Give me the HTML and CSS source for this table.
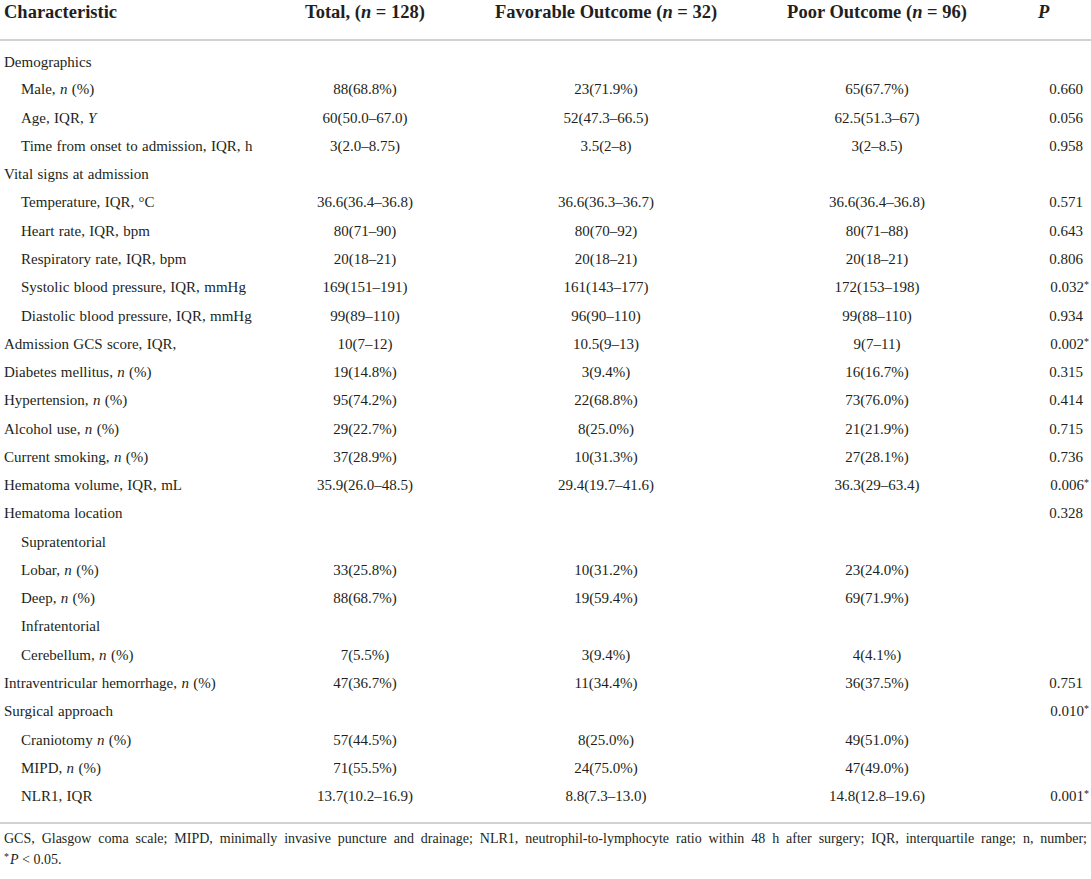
FILE: index.html
```html
<!DOCTYPE html>
<html>
<head>
<meta charset="utf-8">
<link rel="stylesheet" href="styles.css">
</head>
<body>
<table class="tbl">
  <colgroup>
    <col class="c1"><col class="c2"><col class="c3"><col class="c4"><col class="c5">
  </colgroup>
  <thead>
    <tr>
      <th class="lbl">Characteristic</th>
      <th>Total, (<i>n</i> = 128)</th>
      <th>Favorable Outcome (<i>n</i> = 32)</th>
      <th>Poor Outcome (<i>n</i> = 96)</th>
      <th class="pcol"><i>P</i></th>
    </tr>
  </thead>
  <tbody>
    <tr class="first"><td class="lbl">Demographics</td><td></td><td></td><td></td><td></td></tr>
    <tr><td class="lbl ind">Male, <i>n</i> (%)</td><td>88(68.8%)</td><td>23(71.9%)</td><td>65(67.7%)</td><td class="pv">0.660</td></tr>
    <tr><td class="lbl ind">Age, IQR, <i>Y</i></td><td>60(50.0–67.0)</td><td>52(47.3–66.5)</td><td>62.5(51.3–67)</td><td class="pv">0.056</td></tr>
    <tr><td class="lbl ind">Time from onset to admission, IQR, h</td><td>3(2.0–8.75)</td><td>3.5(2–8)</td><td>3(2–8.5)</td><td class="pv">0.958</td></tr>
    <tr><td class="lbl">Vital signs at admission</td><td></td><td></td><td></td><td></td></tr>
    <tr><td class="lbl ind">Temperature, IQR, °C</td><td>36.6(36.4–36.8)</td><td>36.6(36.3–36.7)</td><td>36.6(36.4–36.8)</td><td class="pv">0.571</td></tr>
    <tr><td class="lbl ind">Heart rate, IQR, bpm</td><td>80(71–90)</td><td>80(70–92)</td><td>80(71–88)</td><td class="pv">0.643</td></tr>
    <tr><td class="lbl ind">Respiratory rate, IQR, bpm</td><td>20(18–21)</td><td>20(18–21)</td><td>20(18–21)</td><td class="pv">0.806</td></tr>
    <tr><td class="lbl ind">Systolic blood pressure, IQR, mmHg</td><td>169(151–191)</td><td>161(143–177)</td><td>172(153–198)</td><td class="pv">0.032<span class="ast">*</span></td></tr>
    <tr><td class="lbl ind">Diastolic blood pressure, IQR, mmHg</td><td>99(89–110)</td><td>96(90–110)</td><td>99(88–110)</td><td class="pv">0.934</td></tr>
    <tr><td class="lbl">Admission GCS score, IQR,</td><td>10(7–12)</td><td>10.5(9–13)</td><td>9(7–11)</td><td class="pv">0.002<span class="ast">*</span></td></tr>
    <tr><td class="lbl">Diabetes mellitus, <i>n</i> (%)</td><td>19(14.8%)</td><td>3(9.4%)</td><td>16(16.7%)</td><td class="pv">0.315</td></tr>
    <tr><td class="lbl">Hypertension, <i>n</i> (%)</td><td>95(74.2%)</td><td>22(68.8%)</td><td>73(76.0%)</td><td class="pv">0.414</td></tr>
    <tr><td class="lbl">Alcohol use, <i>n</i> (%)</td><td>29(22.7%)</td><td>8(25.0%)</td><td>21(21.9%)</td><td class="pv">0.715</td></tr>
    <tr><td class="lbl">Current smoking, <i>n</i> (%)</td><td>37(28.9%)</td><td>10(31.3%)</td><td>27(28.1%)</td><td class="pv">0.736</td></tr>
    <tr><td class="lbl">Hematoma volume, IQR, mL</td><td>35.9(26.0–48.5)</td><td>29.4(19.7–41.6)</td><td>36.3(29–63.4)</td><td class="pv">0.006<span class="ast">*</span></td></tr>
    <tr><td class="lbl">Hematoma location</td><td></td><td></td><td></td><td class="pv">0.328</td></tr>
    <tr><td class="lbl ind">Supratentorial</td><td></td><td></td><td></td><td></td></tr>
    <tr><td class="lbl ind">Lobar, <i>n</i> (%)</td><td>33(25.8%)</td><td>10(31.2%)</td><td>23(24.0%)</td><td></td></tr>
    <tr><td class="lbl ind">Deep, <i>n</i> (%)</td><td>88(68.7%)</td><td>19(59.4%)</td><td>69(71.9%)</td><td></td></tr>
    <tr><td class="lbl ind">Infratentorial</td><td></td><td></td><td></td><td></td></tr>
    <tr><td class="lbl ind">Cerebellum, <i>n</i> (%)</td><td>7(5.5%)</td><td>3(9.4%)</td><td>4(4.1%)</td><td></td></tr>
    <tr><td class="lbl">Intraventricular hemorrhage, <i>n</i> (%)</td><td>47(36.7%)</td><td>11(34.4%)</td><td>36(37.5%)</td><td class="pv">0.751</td></tr>
    <tr><td class="lbl">Surgical approach</td><td></td><td></td><td></td><td class="pv">0.010<span class="ast">*</span></td></tr>
    <tr><td class="lbl ind">Craniotomy <i>n</i> (%)</td><td>57(44.5%)</td><td>8(25.0%)</td><td>49(51.0%)</td><td></td></tr>
    <tr><td class="lbl ind">MIPD, <i>n</i> (%)</td><td>71(55.5%)</td><td>24(75.0%)</td><td>47(49.0%)</td><td></td></tr>
    <tr class="last"><td class="lbl ind">NLR1, IQR</td><td>13.7(10.2–16.9)</td><td>8.8(7.3–13.0)</td><td>14.8(12.8–19.6)</td><td class="pv">0.001<span class="ast">*</span></td></tr>
  </tbody>
</table>
<div class="notes">
  <p class="note just">GCS, Glasgow coma scale; MIPD, minimally invasive puncture and drainage; NLR1, neutrophil-to-lymphocyte ratio within 48 h after surgery; IQR, interquartile range; n, number;</p>
  <p class="note"><span class="ast">*</span><i>P</i> &lt; 0.05.</p>
</div>
</body>
</html>
```
FILE: styles.css
```css
html, body {
  margin: 0;
  padding: 0;
  background: #fff;
}
body {
  font-family: "Liberation Serif", "Times New Roman", serif;
  color: #231f20;
  width: 1091px;
}
.tbl {
  width: 1091px;
  border-collapse: collapse;
  table-layout: fixed;
}
.c1 { width: 245px; }
.c2 { width: 240px; }
.c3 { width: 242px; }
.c4 { width: 300px; }
.c5 { width: 64px; }
.tbl th {
  font-size: 18.5px;
  font-weight: bold;
  line-height: 24px;
  padding: 0 0 15px 0;
  text-align: center;
  border-bottom: 2px solid #d2d2d2;
  white-space: nowrap;
}
.tbl th.lbl { text-align: left; padding-left: 4px; }
.tbl th.pcol { text-align: left; padding-left: 11px; }
.tbl td {
  font-size: 15px;
  line-height: 18px;
  height: 28.27px;
  padding: 0;
  text-align: center;
  vertical-align: middle;
  white-space: nowrap;
  box-sizing: border-box;
}
.tbl td.lbl { text-align: left; padding-left: 4px; word-spacing: 0.6px; }
.tbl td.lbl.ind { padding-left: 21px; }
.tbl td.pv { text-align: right; padding-right: 8px; }
.tbl tr.first td { height: 35.27px; padding-top: 7px; }
.tbl tr.last td { height: 41px; padding-bottom: 12px; border-bottom: 2px solid #d2d2d2; }
.ast {
  font-size: 10px;
  vertical-align: 4px;
  line-height: 0;
  margin-right: -6px;
}
.notes {
  padding: 4px 4px 0 4px;
}
.note {
  margin: 0;
  font-size: 14px;
  line-height: 21px;
}
.note .ast { margin-right: 1px; }
.just {
  text-align: justify;
  text-align-last: justify;
}
```
